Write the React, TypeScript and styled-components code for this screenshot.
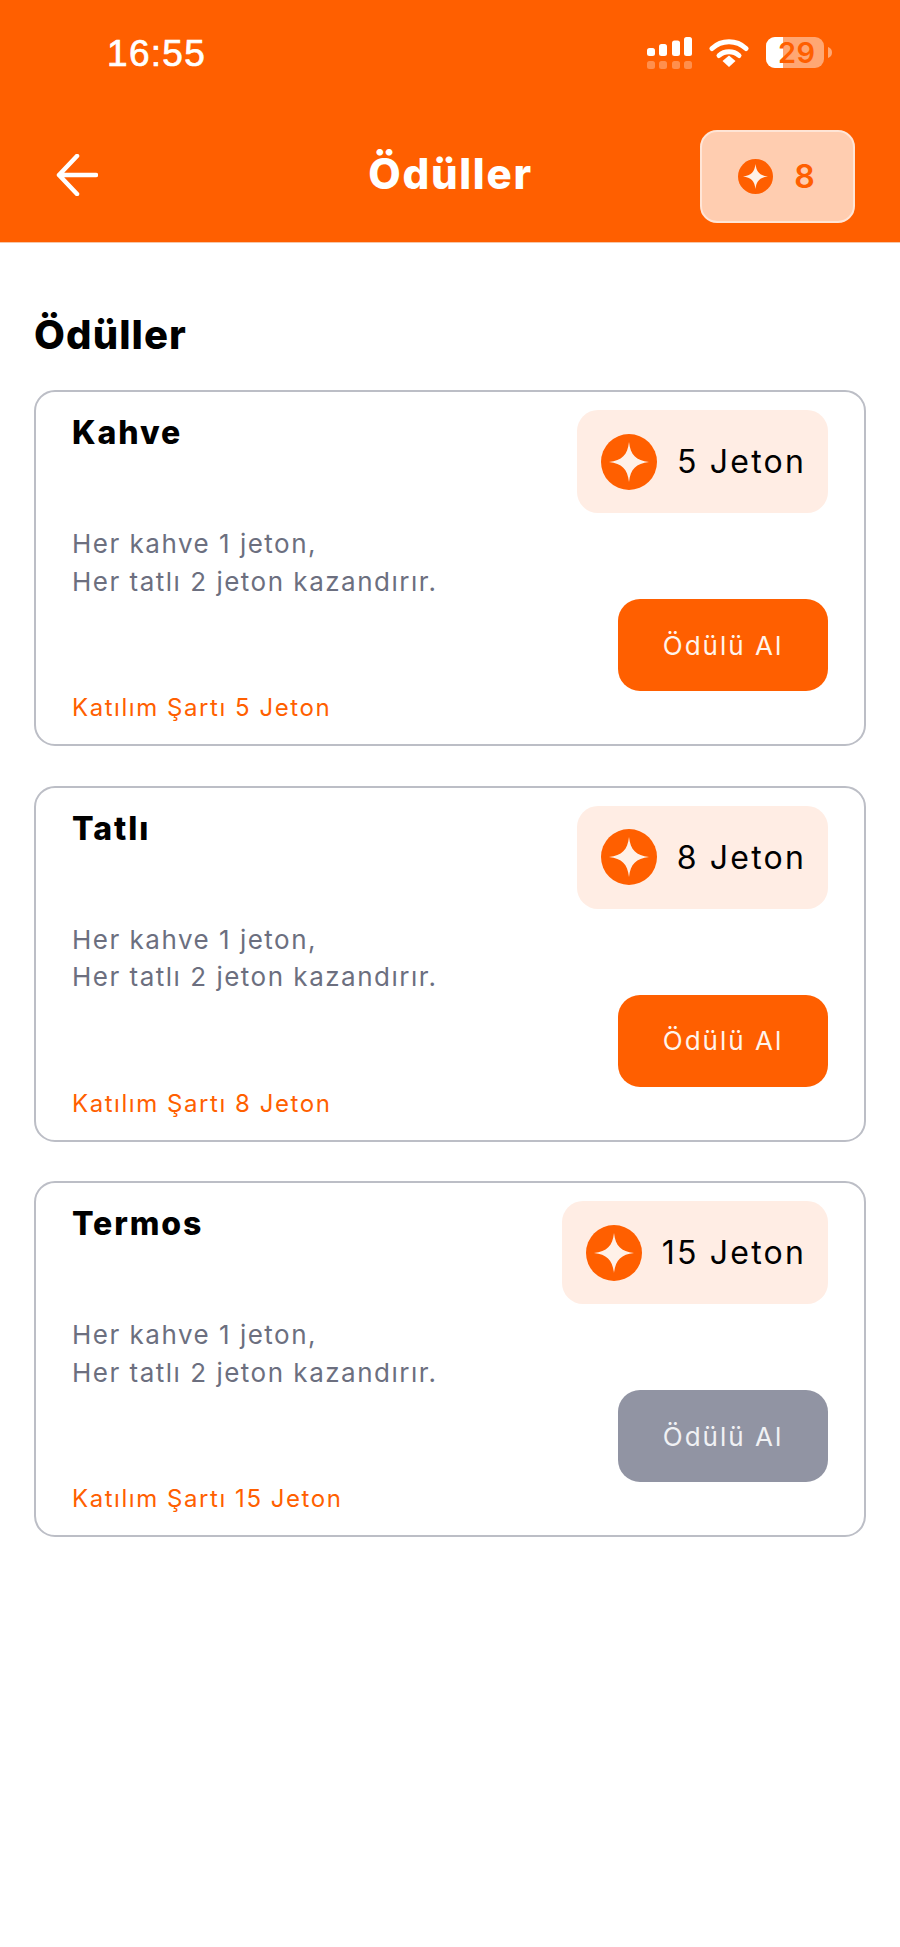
import React from 'react';
import styled, { createGlobalStyle } from 'styled-components';

const ORANGE = '#FF5F00';

const GlobalStyle = createGlobalStyle`
    html, body {
        margin: 0;
        padding: 0;
        background: #ffffff;
    }
    body {
        font-family: "Inter", "Liberation Sans", sans-serif;
    }
`

const Page = styled.div`
    width: 900px;
    height: 1947px;
    background: #ffffff;
    overflow: hidden;
`
const Header = styled.header`
    height: 243px;
    box-sizing: border-box;
    background: ${ORANGE};
    border-bottom: 1px solid #f6c7a8;
    padding-top: 37px;
`
const StatusBar = styled.div`
    height: 93px;
    box-sizing: border-box;
    padding: 0 68px 0 107px;
    display: flex;
    justify-content: space-between;
    align-items: flex-start;
`
const Time = styled.span`
    font-family: "Liberation Sans", sans-serif;
    font-size: 37px;
    line-height: 34px;
    font-weight: 400;
    color: #ffffff;
    letter-spacing: 1.3px;
    -webkit-text-stroke: 0.7px #ffffff;
`
const StatusIcons = styled.div`
    display: flex;
    align-items: flex-start;
    gap: 17px;
`
const Battery = styled.div`
    position: relative;
    width: 66px;
    height: 31px;
`
const BatteryLabel = styled.span`
    position: absolute;
    left: 12px;
    top: 0;
    font-size: 29px;
    line-height: 31px;
    font-weight: 600;
    letter-spacing: 0.4px;
    color: ${ORANGE};
`
const NavBar = styled.div`
    display: grid;
    grid-template-columns: 1fr auto 1fr;
    align-items: center;
    padding: 0 45px 0 56px;
`
const BackButton = styled.div`
    display: flex;
    justify-self: start;
    padding-bottom: 4px;
`
const NavTitle = styled.h1`
    margin: 0;
    padding: 0 10px 5px 0;
    font-size: 42px;
    line-height: 50px;
    font-weight: 800;
    letter-spacing: 1.7px;
    color: #ffffff;
`
const Wallet = styled.div`
    justify-self: end;
    width: 155px;
    height: 93px;
    box-sizing: border-box;
    padding-right: 2px;
    display: flex;
    align-items: center;
    justify-content: center;
    gap: 21px;
    background: #ffcdb0;
    border: 2.5px solid #ffe5d6;
    border-radius: 17px;
`
const WalletCount = styled.span`
    font-size: 32px;
    font-weight: 600;
    color: ${ORANGE};
`
const Content = styled.main`
    padding: 68px 34px 0;
`
const SectionTitle = styled.h2`
    margin: 0 0 32px;
    font-size: 40px;
    line-height: 47px;
    font-weight: 800;
    letter-spacing: 1.1px;
    color: #000000;
`
const RewardList = styled.div`
    display: flex;
    flex-direction: column;
    gap: 39.5px;
`
const Card = styled.article`
    height: 356px;
    box-sizing: border-box;
    padding: 18px 36px 0 36px;
    display: flex;
    justify-content: space-between;
    background: #ffffff;
    border: 2px solid #bcbec6;
    border-radius: 21px;
`
const CardInfo = styled.div`
    display: flex;
    flex-direction: column;
`
const CardTitle = styled.h3`
    margin: 2px 0 0;
    font-size: 32px;
    line-height: 42px;
    font-weight: 800;
    letter-spacing: 1.9px;
    color: #000000;
`
const Description = styled.p`
    margin: 71px 0 0;
    font-size: 26px;
    line-height: 37.5px;
    font-weight: 400;
    letter-spacing: 1.5px;
    color: #6c6f7f;
`
const Requirement = styled.span`
    margin-top: 92px;
    font-size: 24px;
    line-height: 32px;
    font-weight: 400;
    letter-spacing: 1.55px;
    color: ${ORANGE};
`
const CardActions = styled.div`
    display: flex;
    flex-direction: column;
    align-items: flex-end;
`
const PriceBadge = styled.div`
    height: 103px;
    box-sizing: border-box;
    padding: 0 22px 0 24px;
    display: flex;
    align-items: center;
    gap: 20px;
    background: #ffede4;
    border-radius: 21px;
`
const PriceLabel = styled.span`
    font-size: 32px;
    font-weight: 400;
    letter-spacing: 2.2px;
    color: #000000;
`
const ClaimButton = styled.button<{ $disabled?: boolean }>`
    margin-top: 86px;
    width: 210px;
    height: 92px;
    border: none;
    border-radius: 22px;
    font-family: inherit;
    font-size: 26px;
    font-weight: 400;
    letter-spacing: 2px;
    color: ${p => (p.$disabled ? '#f0f1f4' : '#fff4ec')};
    background: ${p => (p.$disabled ? '#9194a3' : ORANGE)};
`

const TokenIcon = ({ size }: { size: number }) => (
    <svg width={size} height={size} viewBox="0 0 56 56">
        <circle cx="28" cy="28" r="28" fill={ORANGE} />
        <path
            d="M28 8C29.5 21 35 26.5 48 28C35 29.5 29.5 35 28 48C26.5 35 21 29.5 8 28C21 26.5 26.5 21 28 8Z"
            fill="#fff1e8"
        />
    </svg>
)

const SignalIcon = () => (
    <svg width="45" height="32" viewBox="0 0 45 32">
        <g fill="#ffffff">
            <rect x="0" y="11" width="8" height="8" rx="2.5" />
            <rect x="12" y="7" width="8" height="12" rx="2.5" />
            <rect x="25" y="3.5" width="8" height="15.5" rx="2.5" />
            <rect x="37" y="0" width="8" height="19" rx="2.5" />
        </g>
        <g fill="#ffffff" opacity="0.3">
            <rect x="0" y="24" width="8" height="8" rx="2.5" />
            <rect x="12" y="24" width="8" height="8" rx="2.5" />
            <rect x="25" y="24" width="8" height="8" rx="2.5" />
            <rect x="37" y="24" width="8" height="8" rx="2.5" />
        </g>
    </svg>
)

const WifiIcon = () => (
    <svg width="40" height="30" viewBox="0 0 40 30">
        <path d="M3 11.5C12.5 2.5 27.5 2.5 37 11.5" fill="none" stroke="#ffffff" strokeWidth="5" strokeLinecap="round" />
        <path d="M10 18.5C15.5 13.5 24.5 13.5 30 18.5" fill="none" stroke="#ffffff" strokeWidth="5" strokeLinecap="round" />
        <path d="M13.5 24L20 18.5L26.5 24L20 30Z" fill="#ffffff" />
    </svg>
)

const BatteryIcon = () => (
    <svg width="66" height="31" viewBox="0 0 66 31">
        <rect x="0" y="0" width="58" height="31" rx="9" fill="#ffffff" opacity="0.45" />
        <path d="M9 0H17V31H9A9 9 0 0 1 0 22V9A9 9 0 0 1 9 0Z" fill="#ffffff" />
        <path d="M62 10C65 11 66 13 66 15.5C66 18 65 20 62 21Z" fill="#ffffff" opacity="0.45" />
    </svg>
)

const BackArrow = () => (
    <svg width="42" height="42" viewBox="0 0 42 42">
        <path
            d="M40 21H3M21 2L3 21L21 40"
            fill="none"
            stroke="#ffffff"
            strokeWidth="4.5"
            strokeLinecap="round"
            strokeLinejoin="round"
        />
    </svg>
)

type Reward = {
    title: string;
    cost: number;
    disabled?: boolean;
}

const rewards: Reward[] = [
    { title: 'Kahve', cost: 5 },
    { title: 'Tatlı', cost: 8 },
    { title: 'Termos', cost: 15, disabled: true },
];

const App = () => (
    <Page>
        <GlobalStyle />
        <Header>
            <StatusBar>
                <Time>16:55</Time>
                <StatusIcons>
                    <SignalIcon />
                    <WifiIcon />
                    <Battery>
                        <BatteryIcon />
                        <BatteryLabel>29</BatteryLabel>
                    </Battery>
                </StatusIcons>
            </StatusBar>
            <NavBar>
                <BackButton><BackArrow /></BackButton>
                <NavTitle>Ödüller</NavTitle>
                <Wallet>
                    <TokenIcon size={35} />
                    <WalletCount>8</WalletCount>
                </Wallet>
            </NavBar>
        </Header>
        <Content>
            <SectionTitle>Ödüller</SectionTitle>
            <RewardList>
                {rewards.map(reward => (
                    <Card key={reward.title}>
                        <CardInfo>
                            <CardTitle>{reward.title}</CardTitle>
                            <Description>
                                Her kahve 1 jeton,<br />
                                Her tatlı 2 jeton kazandırır.
                            </Description>
                            <Requirement>Katılım Şartı {reward.cost} Jeton</Requirement>
                        </CardInfo>
                        <CardActions>
                            <PriceBadge>
                                <TokenIcon size={56} />
                                <PriceLabel>{reward.cost} Jeton</PriceLabel>
                            </PriceBadge>
                            <ClaimButton $disabled={reward.disabled}>Ödülü Al</ClaimButton>
                        </CardActions>
                    </Card>
                ))}
            </RewardList>
        </Content>
    </Page>
);

export default App;
